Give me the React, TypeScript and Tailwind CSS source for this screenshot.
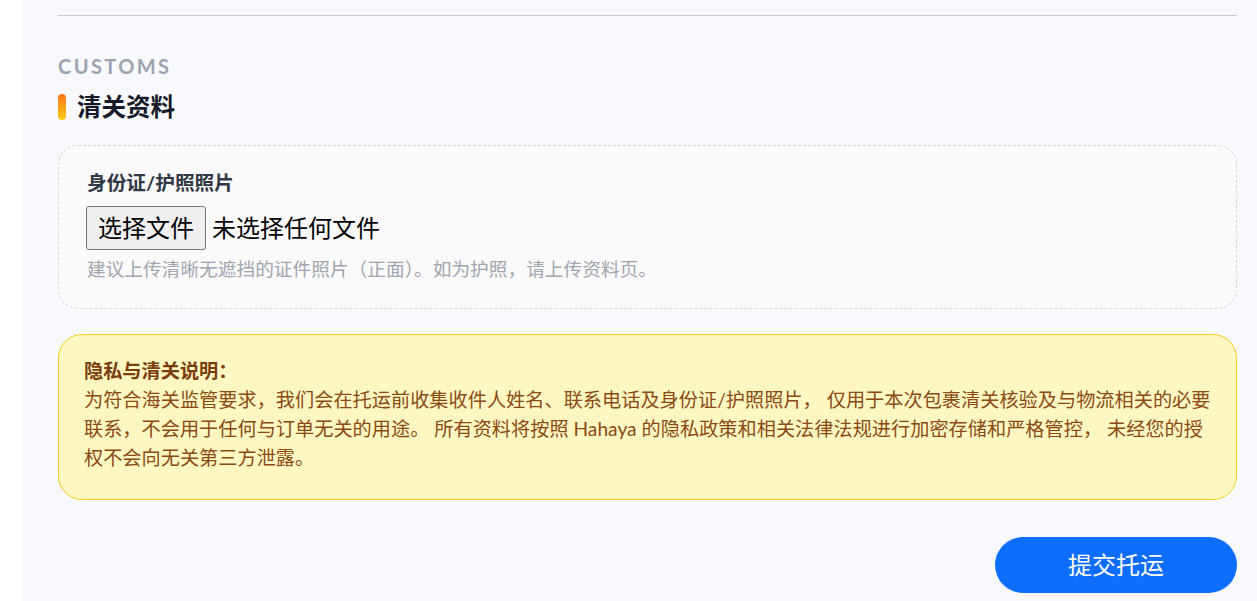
import React from "react";

const cjk = { fontFamily: 'Lato, "Noto Sans CJK SC", sans-serif' };

export default function App() {
  return (
    <div className="flex min-h-[601px] w-full bg-white" style={cjk}>
      <div className="w-[22px] shrink-0 bg-white" />
      <div className="flex-1 bg-[#f8f9fd] pl-[36px] pr-[20px] pt-[15px] pb-[8px]">
        <div className="border-t border-[#cbccd1]" />

        <div className="mt-[38px] text-[20px] leading-[24px] font-bold tracking-[0.12em] text-[#9ca3af] uppercase">
          Customs
        </div>

        <div className="mt-[16px] flex items-center gap-[11px] h-[26px]">
          <div className="w-[8px] h-[26px] rounded-full bg-gradient-to-b from-[#f97316] to-[#facc15]" />
          <h2 className="text-[24.5px] leading-[26px] font-bold text-[#161a2b]">清关资料</h2>
        </div>

        <div className="mt-[25px] rounded-[20px] border border-dashed border-[#d4d6db] bg-[#fafafb] pl-[28px] pr-[28px] pt-[22px] pb-[25px]">
          <div className="text-[19.7px] leading-[29px] font-bold text-[#313845]">身份证/护照照片</div>
          <div className="mt-[9px] -ml-px flex items-center gap-[6px]">
            <button
              type="button"
              className="h-[44px] rounded-[3px] border border-[#767676] bg-[#efefef] px-[11px] text-[24px] leading-[30px] text-black"
            >
              选择文件
            </button>
            <span className="text-[24px] leading-[30px] text-black">未选择任何文件</span>
          </div>
          <div className="mt-[6px] text-[18.7px] leading-[27px] text-[#a1a5ad]">
            建议上传清晰无遮挡的证件照片（正面）。如为护照，请上传资料页。
          </div>
        </div>

        <div className="mt-[25px] rounded-[24px] border border-[#f7cd1b] bg-[#fef7c2] pl-[25px] pr-[16px] pt-[21px] pb-[27px] text-[19.2px] leading-[29px] text-[#8a4a12]">
          <div className="font-bold text-[#7a3d0c]">隐私与清关说明：</div>
          <div className="whitespace-nowrap">
            为符合海关监管要求，我们会在托运前收集收件人姓名、联系电话及身份证/护照照片， 仅用于本次包裹清关核验及与物流相关的必要
            <br />
            联系，不会用于任何与订单无关的用途。 所有资料将按照 Hahaya 的隐私政策和相关法律法规进行加密存储和严格管控， 未经您的授
            <br />
            权不会向无关第三方泄露。
          </div>
        </div>

        <div className="mt-[37px] flex justify-end">
          <button
            type="button"
            className="h-[56px] w-[242px] rounded-full bg-[#0d6efd] text-[24px] text-white"
          >
            提交托运
          </button>
        </div>
      </div>
    </div>
  );
}
